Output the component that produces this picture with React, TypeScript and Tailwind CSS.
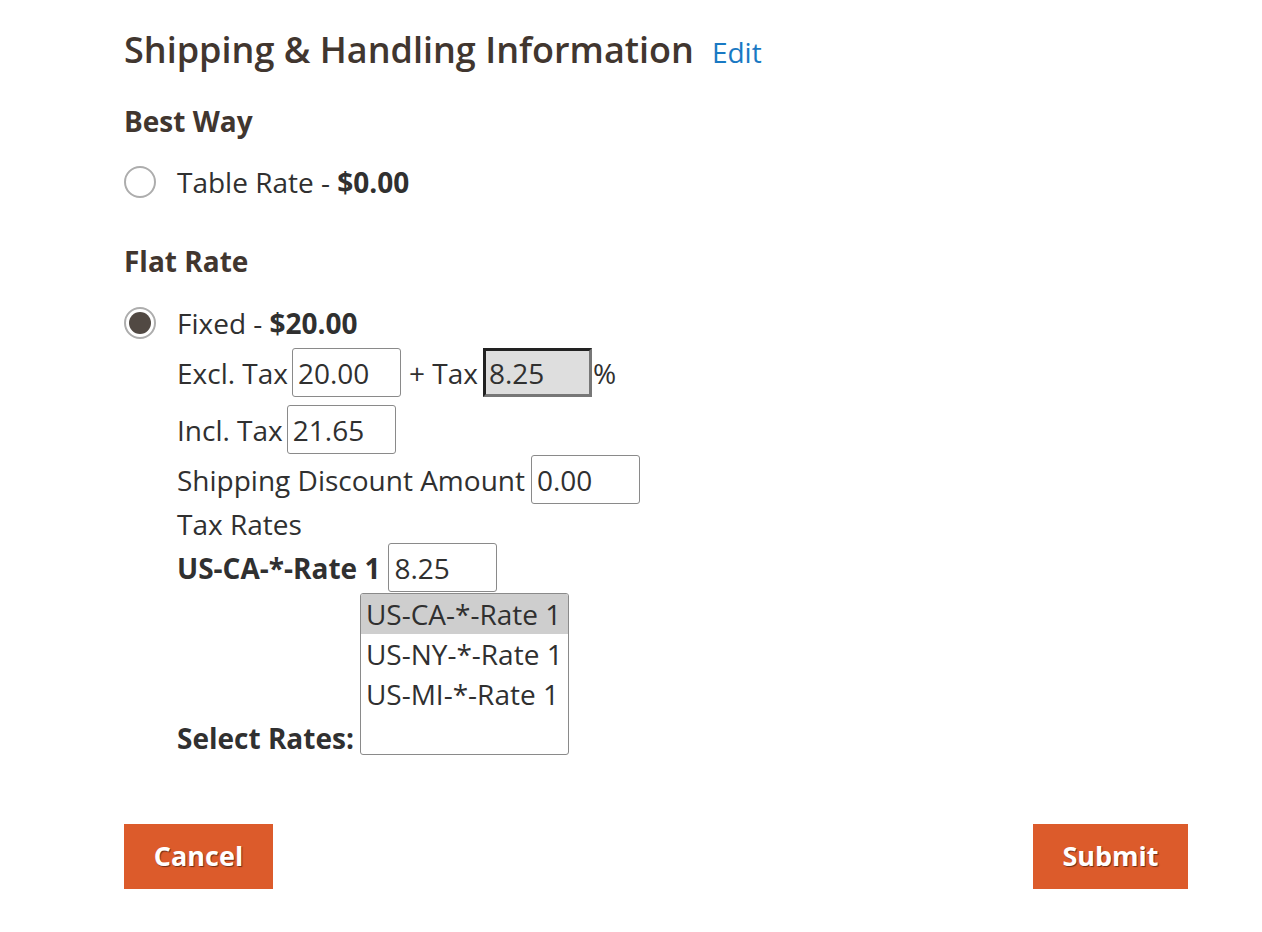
import React from 'react';

const FONT = { fontFamily: '"Open Sans", "Liberation Sans", sans-serif' };

const RATES = ['US-CA-*-Rate 1', 'US-NY-*-Rate 1', 'US-MI-*-Rate 1'];

function Radio({ checked }: { checked?: boolean }) {
    return (
        <span className="flex h-[32px] w-[32px] shrink-0 items-center justify-center rounded-full border-2 border-[#adadad] bg-white">
            {checked ? <span className="h-[22px] w-[22px] rounded-full bg-[#514943]" /> : null}
        </span>
    );
}

function Field({ value, className = '' }: { value: string; className?: string }) {
    return (
        <input
            readOnly
            value={value}
            className={`h-[49px] w-[109px] rounded-[3px] border border-[#8a8a8a] bg-white px-[5px] text-[28px] text-[#303030] outline-none ${className}`}
        />
    );
}

export default function App() {
    return (
        <div style={FONT} className="min-h-[932px] w-[1262px] bg-white pl-[124px] pr-[74px] text-[28px] text-[#303030]">
            <div className="flex items-baseline pt-[27px] leading-[46px]">
                <h2 className="text-[36px] font-semibold text-[#41362f]">Shipping &amp; Handling Information</h2>
                <a href="#" className="ml-[18px] text-[28px] text-[#1979c3]">
                    Edit
                </a>
            </div>

            <div className="mt-[28px] font-bold leading-[36px] text-[#41362f]">Best Way</div>
            <div className="mt-[25px] flex items-center gap-[21px] leading-[36px]">
                <Radio />
                <span>
                    Table Rate - <b>$0.00</b>
                </span>
            </div>

            <div className="mt-[43px] font-bold leading-[36px] text-[#41362f]">Flat Rate</div>
            <div className="mt-[26px] flex items-center gap-[21px] leading-[36px]">
                <Radio checked />
                <span>
                    Fixed - <b>$20.00</b>
                </span>
            </div>

            <div className="pl-[53px]">
                <div className="mt-[7px] flex items-center">
                    <span>Excl. Tax</span>
                    <Field value="20.00" className="ml-[4px]" />
                    <span className="ml-[8px]">+ Tax</span>
                    <input
                        readOnly
                        value="8.25"
                        className="ml-[5px] h-[49px] w-[109px] border-[3px] border-t-[#222] border-l-[#222] border-r-[#777] border-b-[#777] bg-[#dedede] px-[3px] text-[28px] text-[#303030] outline-none"
                    />
                    <span className="ml-[1px]">%</span>
                </div>
                <div className="mt-[8px] flex items-center">
                    <span>Incl. Tax</span>
                    <Field value="21.65" className="ml-[4px]" />
                </div>
                <div className="mt-[1px] flex items-center">
                    <span>Shipping Discount Amount</span>
                    <Field value="0.00" className="ml-[6px]" />
                </div>
                <div className="mt-[2px] leading-[36px]">Tax Rates</div>
                <div className="mt-[1px] flex items-center">
                    <b>US-CA-*-Rate 1</b>
                    <Field value="8.25" className="ml-[8px]" />
                </div>
                <div className="mt-[1px] flex items-end">
                    <b className="mb-[-1px] leading-[36px]">Select Rates:</b>
                    <div className="ml-[6px] h-[162px] w-[209px] overflow-hidden rounded-[3px] border border-[#8a8a8a] bg-white">
                        {RATES.map((r, i) => (
                            <div
                                key={r}
                                className={`h-[40px] whitespace-nowrap px-[5px] leading-[40px] ${i === 0 ? 'bg-[#cecece]' : ''}`}
                            >
                                {r}
                            </div>
                        ))}
                    </div>
                </div>
            </div>

            <div className="mt-[69px] flex justify-between">
                <button className="h-[65px] w-[149px] bg-[#dc5b2b] text-[27px] font-bold text-white [text-shadow:1px_1px_1px_rgba(0,0,0,0.5)]">
                    Cancel
                </button>
                <button className="h-[65px] w-[155px] bg-[#dc5b2b] text-[27px] font-bold text-white [text-shadow:1px_1px_1px_rgba(0,0,0,0.5)]">
                    Submit
                </button>
            </div>
        </div>
    );
}
